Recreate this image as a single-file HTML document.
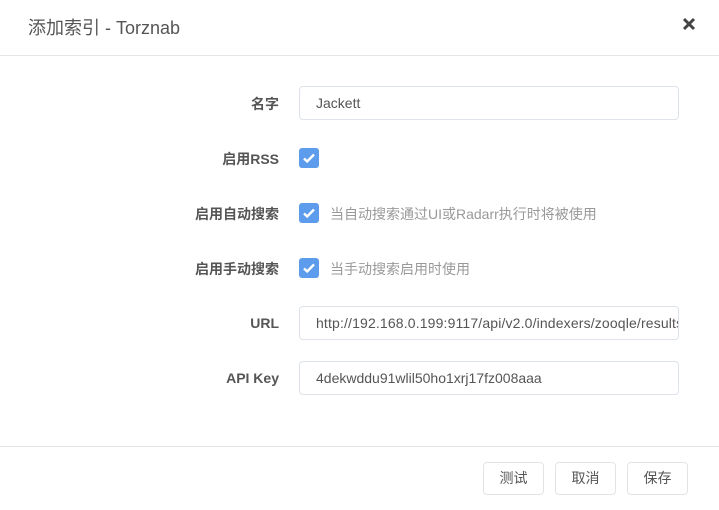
<!DOCTYPE html>
<html><head><meta charset="utf-8"><style>
*{box-sizing:border-box;margin:0;padding:0}
body{width:719px;height:510px;background:#fff;font-family:"Liberation Sans","Noto Sans CJK SC",sans-serif;color:#555;position:relative;overflow:hidden}
.t{position:absolute;left:28px;top:14px;font-size:18px;color:#555}
.x{position:absolute;left:682px;top:17px;width:14px;height:14px}
.hl{position:absolute;left:0;right:0;height:1px;background:#e5e5e5}
.lbl{position:absolute;right:440px;font-size:14px;font-weight:bold;color:#555;text-align:right;white-space:nowrap}
.inp{position:absolute;left:299px;width:380px;height:34px;border:1px solid #dde3e8;border-radius:4px;padding:0 16px;font-size:14px;line-height:32px;color:#555;white-space:nowrap;overflow:hidden}
.cb{position:absolute;left:299px;width:20px;height:20px;background:#5d9cec;border-radius:3px}
.cb svg{position:absolute;left:3px;top:3px}
.h{position:absolute;left:330px;font-size:14px;color:#999;white-space:nowrap}
.b{position:absolute;top:462px;width:61px;height:33px;border:1px solid #e3e3e3;border-radius:4px;font-size:14px;line-height:31px;text-align:center;color:#555}
</style></head><body>
<div class="t">添加索引 - Torznab</div>
<svg class="x" viewBox="0 0 14 14"><path d="M2 2L12 12M12 2L2 12" stroke="#444" stroke-width="3"/></svg>
<div class="hl" style="top:55px"></div>
<div class="lbl" style="top:94px">名字</div>
<div class="inp" style="top:86px">Jackett</div>
<div class="lbl" style="top:149px">启用RSS</div>
<div class="cb" style="top:148px"><svg width="14" height="14" viewBox="0 0 14 14"><path d="M2 7.5l3.2 3L12 3.5" stroke="#fff" stroke-width="2.4" fill="none"/></svg></div>
<div class="lbl" style="top:204px">启用自动搜索</div>
<div class="cb" style="top:203px"><svg width="14" height="14" viewBox="0 0 14 14"><path d="M2 7.5l3.2 3L12 3.5" stroke="#fff" stroke-width="2.4" fill="none"/></svg></div>
<div class="h" style="top:204px">当自动搜索通过UI或Radarr执行时将被使用</div>
<div class="lbl" style="top:259px">启用手动搜索</div>
<div class="cb" style="top:258px"><svg width="14" height="14" viewBox="0 0 14 14"><path d="M2 7.5l3.2 3L12 3.5" stroke="#fff" stroke-width="2.4" fill="none"/></svg></div>
<div class="h" style="top:259px">当手动搜索启用时使用</div>
<div class="lbl" style="top:315px">URL</div>
<div class="inp" style="top:306px;letter-spacing:0.15px">http://192.168.0.199:9117/api/v2.0/indexers/zooqle/results/torznab/</div>
<div class="lbl" style="top:370px">API Key</div>
<div class="inp" style="top:361px">4dekwddu91wlil50ho1xrj17fz008aaa</div>
<div class="hl" style="top:446px"></div>
<div class="b" style="left:483px">测试</div>
<div class="b" style="left:555px">取消</div>
<div class="b" style="left:627px">保存</div>
</body></html>
